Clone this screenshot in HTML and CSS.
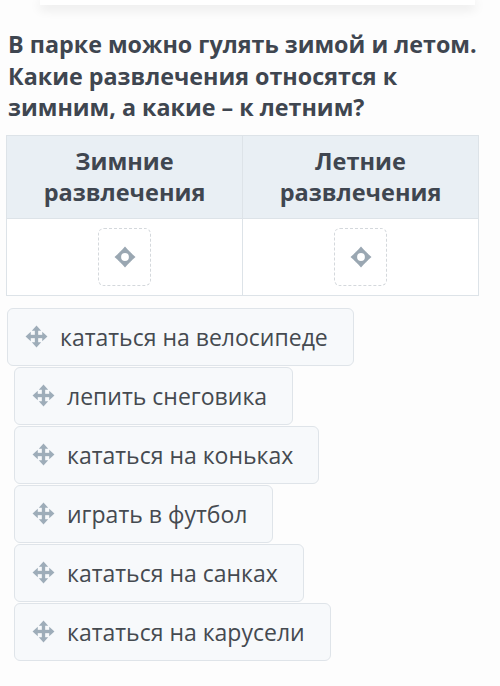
FILE: index.html
```html
<!DOCTYPE html>
<html>
<head>
  <title>Зимние и летние развлечения</title>
  <link rel="stylesheet" href="styles.css">
</head>
<body>

  <div class="top-card"></div>

  <h2 class="question">В парке можно гулять зимой и летом. Какие развлечения относятся к зимним, а какие – к летним?</h2>

  <table class="sort-table">
    <thead>
      <tr>
        <th>Зимние<br>развлечения</th>
        <th>Летние<br>развлечения</th>
      </tr>
    </thead>
    <tbody>
      <tr>
        <td>
          <div class="drop">
            <svg width="24" height="24" viewBox="0 0 24 24"><path d="M12 1.5 L16 6 L8 6 Z M12 22.5 L16 18 L8 18 Z M1.5 12 L6 8 L6 16 Z M22.5 12 L18 8 L18 16 Z" fill="#9aa7b2"/><circle cx="12" cy="12" r="5.6" fill="none" stroke="#9aa7b2" stroke-width="3.4"/></svg>
          </div>
        </td>
        <td>
          <div class="drop">
            <svg width="24" height="24" viewBox="0 0 24 24"><path d="M12 1.5 L16 6 L8 6 Z M12 22.5 L16 18 L8 18 Z M1.5 12 L6 8 L6 16 Z M22.5 12 L18 8 L18 16 Z" fill="#9aa7b2"/><circle cx="12" cy="12" r="5.6" fill="none" stroke="#9aa7b2" stroke-width="3.4"/></svg>
          </div>
        </td>
      </tr>
    </tbody>
  </table>

  <div class="chips">
    <div class="chip chip-first"><span class="move"></span>кататься на велосипеде</div>
    <div class="chip"><span class="move"></span>лепить снеговика</div>
    <div class="chip"><span class="move"></span>кататься на коньках</div>
    <div class="chip"><span class="move"></span>играть в футбол</div>
    <div class="chip"><span class="move"></span>кататься на санках</div>
    <div class="chip"><span class="move"></span>кататься на карусели</div>
  </div>

  <script>
    // every chip gets the same four-arrow handle
    const moveIcon = `
      <svg width="25" height="25" viewBox="0 0 24 24">
        <path d="M12 1.5 L16.5 6.5 L7.5 6.5 Z M12 22.5 L16.5 17.5 L7.5 17.5 Z M1.5 12 L6.5 7.5 L6.5 16.5 Z M22.5 12 L17.5 7.5 L17.5 16.5 Z" fill="#9eadb9"/>
        <rect x="10.4" y="5" width="3.2" height="14" fill="#9eadb9"/>
        <rect x="5" y="10.4" width="14" height="3.2" fill="#9eadb9"/>
      </svg>`;
    document.querySelectorAll('.move').forEach(el => {
      el.innerHTML = moveIcon;
    });
  </script>
</body>
</html>
```

FILE: styles.css
```css
body {
  margin: 0;
  background: #fdfdfd;
  font-family: "Open Sans", "Noto Sans", sans-serif;
  color: #3f4650;
}
.top-card {
  height: 5px;
  margin: 0 25px 0 40px;
  background: #fff;
  box-shadow: 0 3px 12px rgba(0, 0, 0, 0.14);
}
.question {
  margin: 24px 0 11px 8px;
  font-size: 23.3px;
  line-height: 31.5px;
  font-weight: 700;
  color: #3f4650;
}
.sort-table {
  margin: 0 21px 0 6px;
  width: 473px;
  border-collapse: collapse;
  table-layout: fixed;
  background: #fff;
}
.sort-table th,
.sort-table td {
  border: 1px solid #dde3e8;
  text-align: center;
}
.sort-table th {
  background: #e9eff4;
  font-size: 23.5px;
  line-height: 31px;
  font-weight: 700;
  padding: 10px 4px 10px;
  color: #3f4650;
}
.sort-table td {
  height: 76px;
  padding: 0;
}
.drop {
  width: 51px;
  height: 56px;
  margin: 0 auto;
  border: 1.5px dashed #d4d8dc;
  border-radius: 6px;
  display: flex;
  align-items: center;
  justify-content: center;
}
.chips {
  margin-top: 12px;
  padding-left: 14px;
  display: flex;
  flex-direction: column;
  align-items: flex-start;
  gap: 1px;
}
.chip {
  display: flex;
  align-items: center;
  gap: 11px;
  height: 56px;
  padding: 0 25px 0 16px;
  background: #f7f9fb;
  border: 1px solid #dfe4e9;
  border-radius: 6px;
  font-size: 23px;
  color: #454a50;
}
.chip-first {
  margin-left: -7px;
}
.move {
  display: flex;
}
```
